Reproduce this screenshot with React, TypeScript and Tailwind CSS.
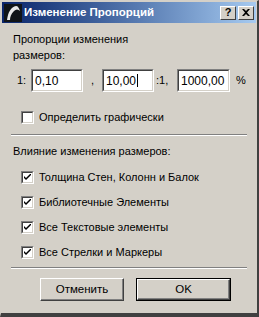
import React from 'react';

const font = { fontFamily: '"Liberation Sans", Tahoma, Arial, sans-serif' };

const Check = ({ checked }: { checked: boolean }) => (
  <span className="flex h-[13px] w-[13px] shrink-0 items-center justify-center border border-t-[#808080] border-l-[#808080] border-r-white border-b-white">
    <span className="flex h-[11px] w-[11px] items-center justify-center border border-t-[#404040] border-l-[#404040] border-r-[#d4d0c8] border-b-[#d4d0c8] bg-white">
      {checked && (
        <svg width="7" height="7" viewBox="0 0 7 7">
          <path d="M0 2 L0 4 L2 6 L7 1 L7 -1 L2 4 Z" fill="#000" />
        </svg>
      )}
    </span>
  </span>
);

const Field = ({ value, width, caret }: { value: string; width: string; caret?: boolean }) => (
  <div className={`${width} h-[23px] border border-t-[#808080] border-l-[#808080] border-r-white border-b-white`}>
    <div className="flex h-full w-full items-center border border-t-[#404040] border-l-[#404040] border-r-[#d4d0c8] border-b-[#d4d0c8] bg-white pl-[2px] text-[12px] text-black">
      {value}
      {caret && <span className="ml-[1px] h-[13px] w-px bg-black" />}
    </div>
  </div>
);

const Separator = () => (
  <div className="mr-[10px] ml-[10px] border-t border-b border-t-[#808080] border-b-white" />
);

const options = [
  'Толщина Стен, Колонн и Балок',
  'Библиотечные Элементы',
  'Все Текстовые элементы',
  'Все Стрелки и Маркеры',
];

export default function App() {
  return (
    <div
      className="flex h-[317px] w-[259px] flex-col border-t border-l border-r-2 border-b-4 border-t-[#d4d0c8] border-l-[#d4d0c8] border-r-[#404040] border-b-[#404040] bg-[#d4d0c8] text-[11px] text-black"
      style={font}
    >
      {/* Title bar */}
      <div className="mx-[1px] mt-[1px] flex h-[21px] items-center bg-gradient-to-r from-[#0a246a] to-[#a6caf0] pr-[2px] pl-[2px]">
        <div className="flex h-[18px] w-[18px] items-center justify-center bg-[#101418]">
          <svg width="16" height="16" viewBox="0 0 16 16">
            <path d="M2 15 C3 7 6 2 11 1 C13 1 14 3 15 6 C13 4 11 4 9 6 C6 9 5 12 5 15 Z" fill="#e8e8e8" />
          </svg>
        </div>
        <span className="ml-[2px] text-[11.5px] font-bold text-white">Изменение Пропорций</span>
        <div className="ml-auto flex gap-[2px]">
          <div className="flex h-[14px] w-[16px] items-center justify-center border border-t-white border-l-white border-r-[#404040] border-b-[#404040] bg-[#d4d0c8] text-[11px] leading-none font-bold">
            ?
          </div>
          <div className="flex h-[14px] w-[16px] items-center justify-center border border-t-white border-l-white border-r-[#404040] border-b-[#404040] bg-[#d4d0c8]">
            <svg width="8" height="7" viewBox="0 0 8 7">
              <path d="M0 0 L2 0 L4 2 L6 0 L8 0 L5 3.5 L8 7 L6 7 L4 5 L2 7 L0 7 L3 3.5 Z" fill="#000" />
            </svg>
          </div>
        </div>
      </div>

      {/* Scale */}
      <div className="mt-[8px] pl-[12px] leading-[16px]">
        Пропорции изменения
        <br />
        размеров:
      </div>
      <div className="mt-[6px] flex items-center pl-[16px]">
        <span className="w-[14px]">1:</span>
        <Field value="0,10" width="w-[52px]" />
        <span className="ml-[8px] w-[11px]">,</span>
        <Field value="10,00" width="w-[52px]" caret />
        <span className="ml-[2px] w-[21px]">:1,</span>
        <Field value="1000,00" width="w-[53px]" />
        <span className="ml-[6px]">%</span>
      </div>

      <div className="mt-[17px] flex items-center gap-[5px] pl-[20px]">
        <Check checked={false} />
        <span>Определить графически</span>
      </div>

      <div className="mt-[8px]">
        <Separator />
      </div>

      {/* Affected elements */}
      <div className="mt-[7px] pl-[12px]">Влияние изменения размеров:</div>
      <div className="mt-[11px] flex flex-col gap-[11px]">
        {options.map((label) => (
          <div key={label} className="flex h-[14px] items-center gap-[5px] pl-[20px]">
            <Check checked />
            <span>{label}</span>
          </div>
        ))}
      </div>

      <div className="mt-[8px]">
        <Separator />
      </div>

      {/* Buttons */}
      <div className="mt-[9px] flex gap-[12px] pl-[39px]">
        <button className="h-[23px] w-[84px] border border-t-white border-l-white border-r-[#404040] border-b-[#404040] bg-[#d4d0c8] text-[11.5px] shadow-[inset_-1px_-1px_0_#808080]">
          Отменить
        </button>
        <div className="border border-black">
          <button className="h-[21px] w-[93px] border border-t-white border-l-white border-r-[#404040] border-b-[#404040] bg-[#d4d0c8] text-[11.5px] shadow-[inset_-1px_-1px_0_#808080]">
            OK
          </button>
        </div>
      </div>
    </div>
  );
}
